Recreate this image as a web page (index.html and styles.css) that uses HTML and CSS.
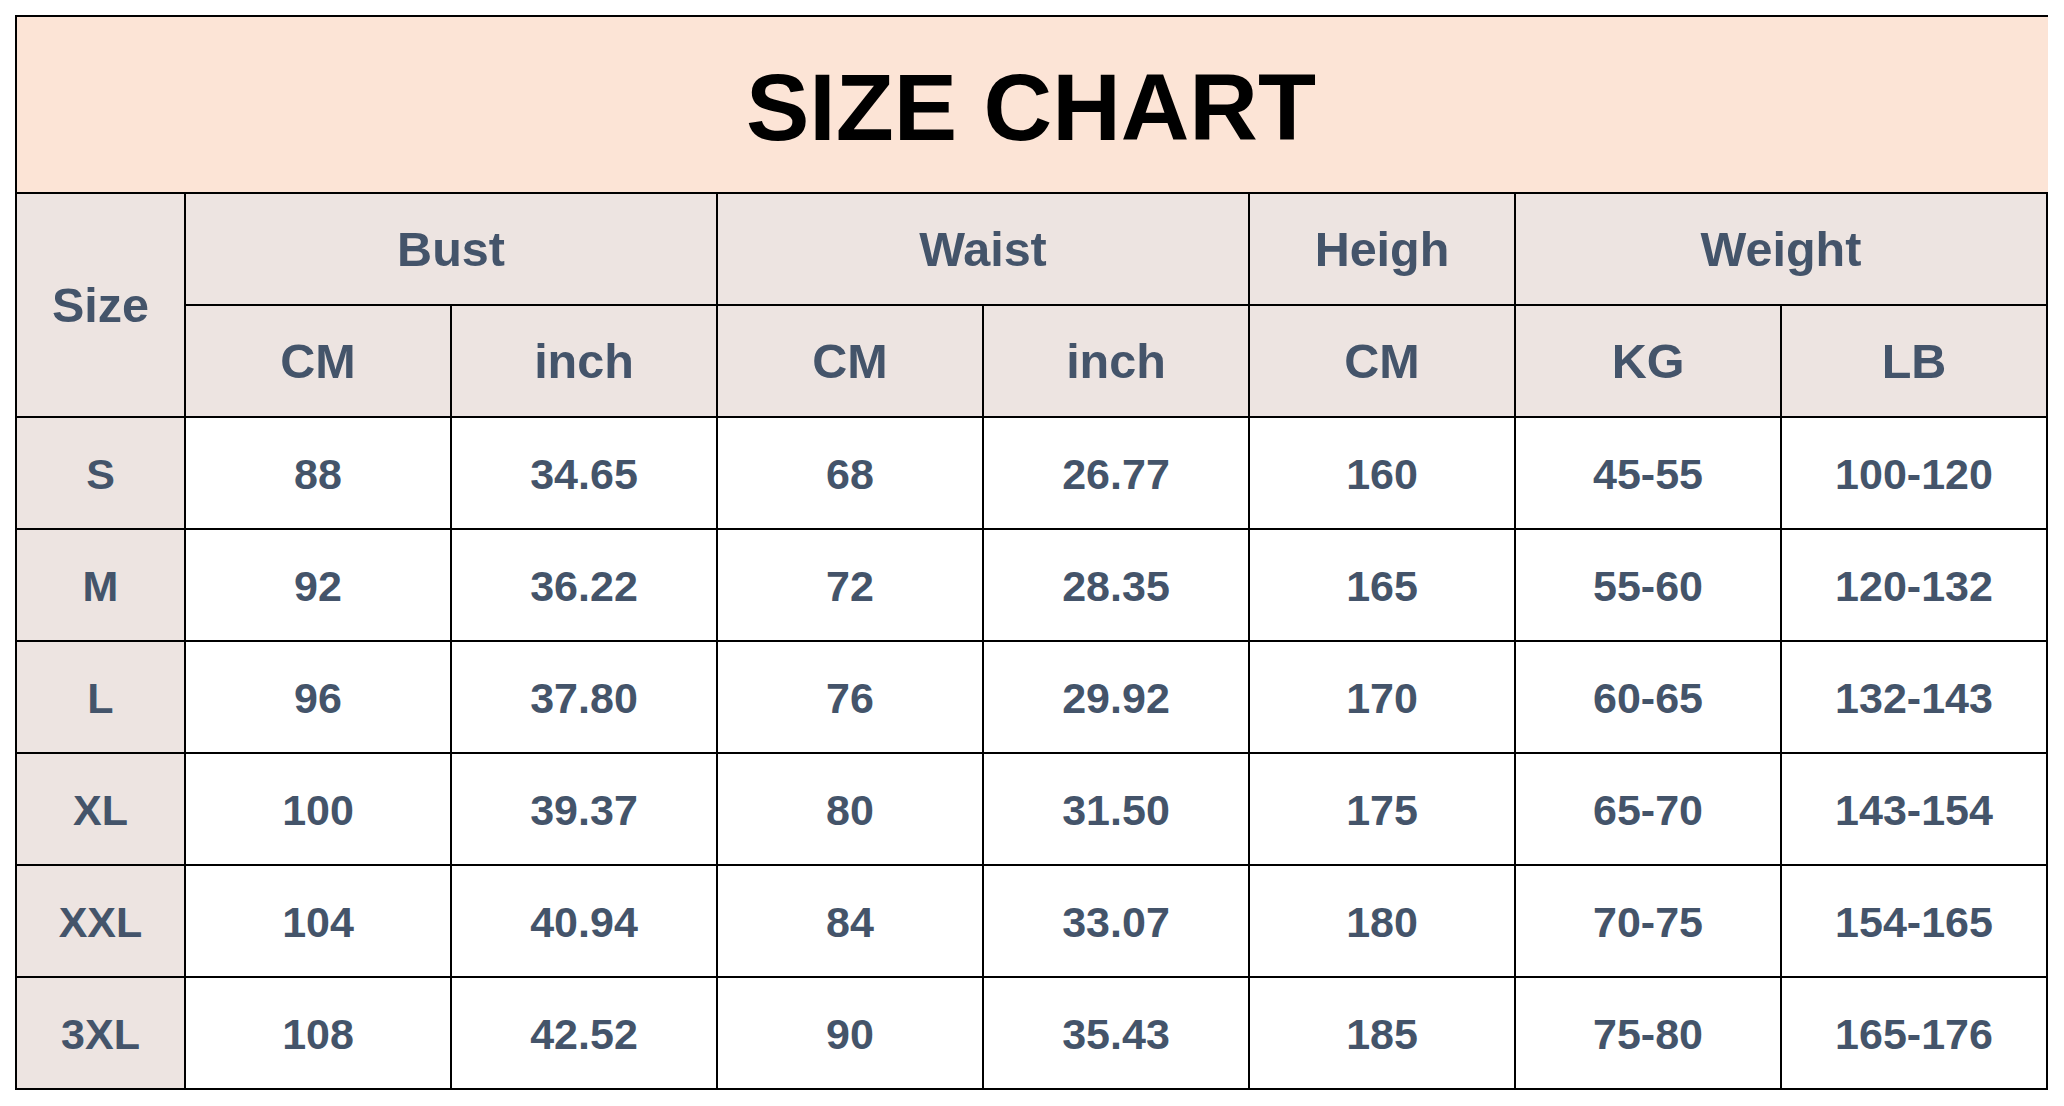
FILE: index.html
```html
<!DOCTYPE html>
<html lang="en">
<head>
<meta charset="utf-8">
<title>Size Chart</title>
<link rel="stylesheet" href="styles.css">
</head>
<body>
<div class="sheet">
  <div class="title">SIZE CHART</div>
  <div class="grid">
    <div class="cell head size-head">Size</div>
    <div class="cell head span2">Bust</div>
    <div class="cell head span2">Waist</div>
    <div class="cell head">Heigh</div>
    <div class="cell head span2">Weight</div>
    <div class="cell head">CM</div>
    <div class="cell head">inch</div>
    <div class="cell head">CM</div>
    <div class="cell head">inch</div>
    <div class="cell head">CM</div>
    <div class="cell head">KG</div>
    <div class="cell head">LB</div>

    <div class="cell size">S</div><div class="cell">88</div><div class="cell">34.65</div><div class="cell">68</div><div class="cell">26.77</div><div class="cell">160</div><div class="cell">45-55</div><div class="cell">100-120</div>
    <div class="cell size">M</div><div class="cell">92</div><div class="cell">36.22</div><div class="cell">72</div><div class="cell">28.35</div><div class="cell">165</div><div class="cell">55-60</div><div class="cell">120-132</div>
    <div class="cell size">L</div><div class="cell">96</div><div class="cell">37.80</div><div class="cell">76</div><div class="cell">29.92</div><div class="cell">170</div><div class="cell">60-65</div><div class="cell">132-143</div>
    <div class="cell size">XL</div><div class="cell">100</div><div class="cell">39.37</div><div class="cell">80</div><div class="cell">31.50</div><div class="cell">175</div><div class="cell">65-70</div><div class="cell">143-154</div>
    <div class="cell size">XXL</div><div class="cell">104</div><div class="cell">40.94</div><div class="cell">84</div><div class="cell">33.07</div><div class="cell">180</div><div class="cell">70-75</div><div class="cell">154-165</div>
    <div class="cell size">3XL</div><div class="cell">108</div><div class="cell">42.52</div><div class="cell">90</div><div class="cell">35.43</div><div class="cell">185</div><div class="cell">75-80</div><div class="cell">165-176</div>
  </div>
</div>
</body>
</html>
```
FILE: styles.css
```css
html, body {
  margin: 0;
  padding: 0;
  background: #ffffff;
}

body {
  font-family: "Liberation Sans", Arial, sans-serif;
  font-weight: bold;
}

.sheet {
  margin: 15px 0 0 15px;
  width: 2033px;
}

.title {
  box-sizing: border-box;
  height: 177px;
  border-top: 2px solid #000;
  border-left: 2px solid #000;
  background: #fce4d6;
  color: #000;
  font-size: 95px;
  line-height: 1;
  display: flex;
  align-items: center;
  justify-content: center;
  padding-top: 5px;
  padding-right: 3px;
}

.grid {
  display: grid;
  grid-template-columns: 167px repeat(7, 264px);
  grid-template-rows: repeat(8, 110px);
  gap: 2px;
  padding: 2px;
  background: #000;
}

.cell {
  background: #ffffff;
  color: #44546a;
  font-size: 43px;
  line-height: 1;
  display: flex;
  align-items: center;
  justify-content: center;
  padding-top: 3px;
}

.head {
  background: #ede4e1;
  font-size: 48.5px;
  padding-top: 1px;
}

.size-head {
  grid-row: span 2;
}

.span2 {
  grid-column: span 2;
}

.size {
  background: #ede4e1;
}
```
